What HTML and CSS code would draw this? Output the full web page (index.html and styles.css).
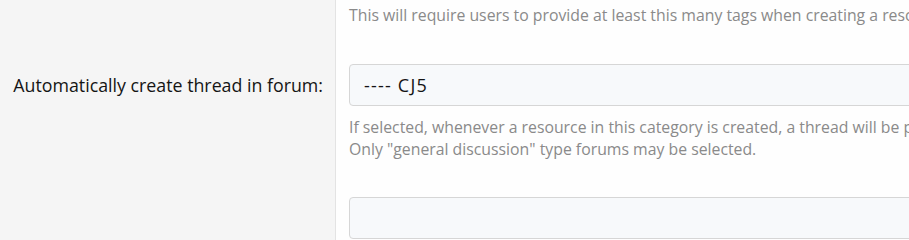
FILE: index.html
```html
<!DOCTYPE html>
<html>
<head>
<meta charset="utf-8">
<link rel="stylesheet" href="styles.css">
</head>
<body>
<div class="form">
  <div class="row row-top">
    <div class="label-cell"></div>
    <div class="control-cell">
      <div class="hint">This will require users to provide at least this many tags when creating a resource.</div>
    </div>
  </div>
  <div class="row row-main">
    <div class="label-cell"><label class="label">Automatically create thread in forum:</label></div>
    <div class="control-cell">
      <div class="select">---- CJ5</div>
      <div class="hint hint-multi">If selected, whenever a resource in this category is created, a thread will be posted in this forum.<br>Only "general discussion" type forums may be selected.</div>
    </div>
  </div>
  <div class="row row-next">
    <div class="label-cell"></div>
    <div class="control-cell">
      <div class="select select-empty"></div>
    </div>
  </div>
</div>
</body>
</html>
```
FILE: styles.css
```css
html, body {
  margin: 0;
  padding: 0;
  background: #fefefe;
}
body {
  font-family: "Open Sans", "Noto Sans", sans-serif;
  width: 909px;
  overflow: hidden;
}
.form {
  display: flex;
  flex-direction: column;
  min-height: 100vh;
  overflow: hidden;
}
.row {
  display: grid;
  grid-template-columns: 336px 573px;
}
.row-next {
  flex: 1;
}
.label-cell {
  background: #f5f5f5;
  border-right: 1px solid #e3e3e3;
  display: flex;
  align-items: flex-start;
  justify-content: flex-end;
  padding-right: 12px;
}
.control-cell {
  padding-left: 13px;
  min-width: 0;
  overflow: hidden;
}
.hint {
  font-size: 15.8px;
  line-height: 22px;
  color: #8a8a8a;
  white-space: nowrap;
}
.row-top .hint {
  padding-top: 4px;
}
.row-main .label-cell {
  padding-top: 38px;
}
.row-main .control-cell {
  padding-top: 38px;
}
.label {
  font-size: 17.8px;
  line-height: 42px;
  color: #141414;
}
.select {
  height: 40px;
  border: 1px solid #d6d6d6;
  border-radius: 4px;
  background: #f7f9fb;
  font-size: 18px;
  letter-spacing: 1.2px;
  line-height: 40px;
  padding-left: 14px;
  color: #141414;
  margin-right: -20px;
}
.hint-multi {
  margin-top: 10px;
}
.row-next .control-cell {
  padding-top: 37px;
}
```
